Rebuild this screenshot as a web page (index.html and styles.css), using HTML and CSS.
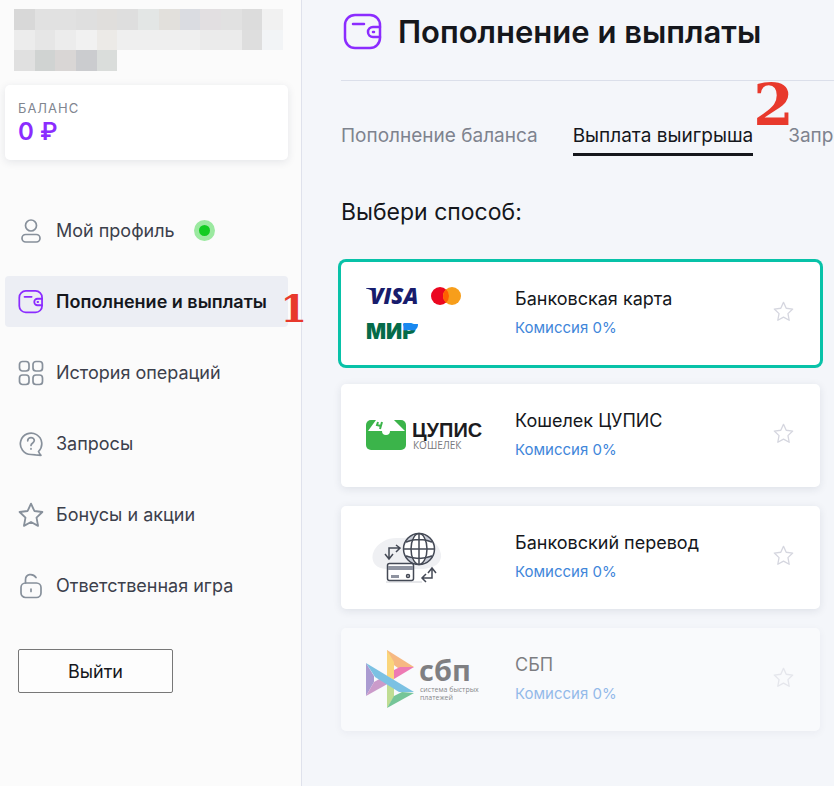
FILE: index.html
```html
<!DOCTYPE html>
<html lang="ru">
<head>
  <meta charset="UTF-8">
  <meta name="viewport" content="width=device-width, initial-scale=1">
  <title>Пополнение и выплаты</title>
  <link rel="stylesheet" href="styles.css">
</head>
<body>
  <svg class="sprite" aria-hidden="true">
    <symbol id="wallet" viewBox="0 0 40 38">
      <rect x="2" y="2" width="35" height="33" rx="10"/>
      <path d="M10 11h11M37 14h-7a5 5 0 0 0 0 10h7M30 19h1"/>
    </symbol>
    <symbol id="star" viewBox="0 0 24 24">
      <path d="M12 1.5l3.1 6.8 7.4.9-5.4 5.2 1.4 7.6-6.5-3.6L5.500 22l1.400-7.600L1.500 9.200l7.400-.9z"/>
    </symbol>
  </svg>

  <aside class="sidebar">
    <svg class="user" viewBox="0 0 13 3" preserveAspectRatio="none" shape-rendering="crispEdges" aria-hidden="true">
      <path fill="#d8d8d8" d="M0 0h1v1H0z"/><path fill="#e1e1e1" d="M1 0h2v1H1z"/>
      <path fill="#dfdfdf" d="M3 0h1v1H3z"/><path fill="#e0dedc" d="M4 0h1v1H4z"/>
      <path fill="#dedede" d="M5 0h1v1H5z"/><path fill="#e3e6e5" d="M6 0h1v1H6z"/>
      <path fill="#e2e0dc" d="M7 0h1v1H7z"/><path fill="#dadce1" d="M8 0h1v1H8z"/>
      <path fill="#e2dfe1" d="M9 0h1v1H9z"/><path fill="#e1e1e1" d="M10 0h1v1h-1z"/>
      <path fill="#dcdcdc" d="M11 0h1v1h-1z"/><path fill="#f1f1f1" d="M12 0h1v1h-1z"/>
      <path fill="#ececec" d="M0 1h1v1H0z"/><path fill="#e6e6e6" d="M1 1h1v1H1z"/>
      <path fill="#ececec" d="M2 1h1v1H2z"/><path fill="#f1f1f1" d="M3 1h1v1H3z"/>
      <path fill="#eceae7" d="M4 1h1v1H4z"/><path fill="#efefef" d="M5 1h4v1H5z"/>
      <path fill="#ebebeb" d="M9 1h2v1H9z"/><path fill="#dedede" d="M11 1h1v1h-1z"/>
      <path fill="#f2f4f6" d="M12 1h1v1h-1z"/><path fill="#e0e0e0" d="M0 2h1v1H0z"/>
      <path fill="#d0d3d2" d="M1 2h1v1H1z"/><path fill="#d9d6d5" d="M2 2h1v1H2z"/>
      <path fill="#cbcccf" d="M3 2h1v1H3z"/><path fill="#dadddb" d="M4 2h1v1H4z"/>
    </svg>

    <div class="balance">
      <span class="balance-label">БАЛАНС</span>
      <strong class="balance-sum">0 ₽</strong>
    </div>

    <nav class="menu">
      <a href="#">
        <svg class="icon" viewBox="0 0 26 26"><circle cx="13" cy="7.500" r="5.500"/><rect x="4" y="16.500" width="18" height="7.500" rx="3.700"/></svg>
        Мой профиль <span class="online"></span>
      </a>
      <a href="#" class="active">
        <svg class="icon"><use href="#wallet"/></svg>
        Пополнение и выплаты
        <span class="step step-one">1</span>
      </a>
      <a href="#">
        <svg class="icon" viewBox="0 0 26 26"><rect x="1.500" y="1.500" width="9.500" height="9.500" rx="3"/><rect x="15" y="1.500" width="9.500" height="9.500" rx="3"/><rect x="1.500" y="15" width="9.500" height="9.500" rx="3"/><rect x="15" y="15" width="9.500" height="9.500" rx="3"/></svg>
        История операций
      </a>
      <a href="#">
        <svg class="icon" viewBox="0 0 26 26"><path d="M20.500 20.500A10.700 10.700 0 1 0 13 23.500c2 0 3 .1 4.500.4l5.500.4c-1-1-1.800-2.200-2.500-3.800z"/><path d="M9.700 9.800c0-4.300 6.600-4.100 6.600-.2 0 2.400-3.300 2.300-3.300 4.900M13 17.500v.6"/></svg>
        Запросы
      </a>
      <a href="#">
        <svg class="icon"><use href="#star"/></svg>
        Бонусы и акции
      </a>
      <a href="#">
        <svg class="icon" viewBox="0 0 26 26"><rect x="3" y="10" width="20" height="14.500" rx="4.500"/><path d="M7.500 10V7c0-6 7-7.300 10.500-2.500M13 16v2.500"/></svg>
        Ответственная игра
      </a>
    </nav>

    <button type="button" class="logout">Выйти</button>
  </aside>

  <main class="content">
    <header class="page-title">
      <svg class="title-icon"><use href="#wallet"/></svg>
      <h1>Пополнение и выплаты</h1>
    </header>

    <nav class="tabs">
      <a href="#">Пополнение баланса</a>
      <a href="#" class="active">Выплата выигрыша<span class="step step-two">2</span></a>
      <a href="#">Запросы на выплату</a>
    </nav>

    <h2>Выбери способ:</h2>

    <ul class="methods">
      <li class="method selected">
        <label>
          <input type="radio" name="method" checked>
          <svg class="logo" viewBox="0 0 118 64" aria-hidden="true">
            <defs>
              <linearGradient id="mir" gradientUnits="userSpaceOnUse" x1="0" y1="42" x2="0" y2="57">
                <stop offset=".4" stop-color="#1988f0"/><stop offset=".45" stop-color="#056b49"/>
              </linearGradient>
            </defs>
            <path fill="#181c6c" d="M0 6h7l2 6C7 9 4 7 0 6.500z"/>
            <text class="visa" x="4" y="22">VISA</text>
            <circle cx="74" cy="14" r="9" fill="#eb0720"/>
            <circle cx="86" cy="14" r="9" fill="#f79e1b"/>
            <path fill="#ff5f00" d="M80 7.300a9 9 0 0 1 0 13.400 9 9 0 0 1 0-13.400z"/>
            <text class="mir" x="0" y="57">МИ<tspan fill="url(#mir)">Р</tspan></text>
            <path fill="#1988f0" d="M37 42h15c0 4-2 6-5 6h-5c-3 0-4-3-5-6z"/>
          </svg>
          <span class="info"><b>Банковская карта</b><span>Комиссия 0%</span></span>
        </label>
        <button type="button" class="fav" aria-label="В избранное"><svg><use href="#star"/></svg></button>
      </li>
      <li class="method">
        <label>
          <input type="radio" name="method">
          <svg class="logo" viewBox="0 0 118 64" aria-hidden="true">
            <rect y="16" width="40" height="30" rx="5" fill="#3bb44a"/>
            <path fill="#279a3b" d="M2 27L10 17h19l9 10z"/>
            <path fill="#fff" d="M10 16l17-1 12 12H24a4 4 0 0 1-8 0H2z"/>
            <path fill="none" stroke="#3bb44a" stroke-width="2" d="M12 18l-1 3 4 1M16 18l-2 7"/>
            <text class="tsupis" x="46" y="33">ЦУПИС</text>
            <text class="tsupis-sub" x="47" y="45">КОШЕЛЕК</text>
          </svg>
          <span class="info"><b>Кошелек ЦУПИС</b><span>Комиссия 0%</span></span>
        </label>
        <button type="button" class="fav" aria-label="В избранное"><svg><use href="#star"/></svg></button>
      </li>
      <li class="method">
        <label>
          <input type="radio" name="method">
          <svg class="logo" viewBox="0 0 118 64" aria-hidden="true">
            <path fill="#eff0f3" d="M20 14c10-4 18 0 28-4 12-3 25 7 27 18 1 10-8 14-18 15H20C2 42 2 22 20 14z"/>
            <path fill="#e6e7ea" d="M20 55h36v2H20z"/>
            <circle cx="53" cy="23" r="16" fill="#c8ccd7"/>
            <path fill="#fff" d="M48 8h10l3 7 7 3v10l-7 3-3 7H48l-3-7-7-3V18l7-3z"/>
            <g class="line">
              <circle class="line" cx="53" cy="23" r="15.500"/>
              <ellipse class="line" cx="53" cy="23" rx="8" ry="15.500"/>
              <path d="M53 8v31M37 23h32M40 16c8-3 18-3 26 0M40 30c8 3 18 3 26 0"/>
              <path d="M23 32V22h10M30 19l4 3-4 4M19 28l4 5 4-5"/>
              <path d="M66 43v9H56M62 47l4-5 4 5M60 48l-4 4 4 4"/>
            </g>
            <rect class="line" x="21.500" y="37.500" width="26" height="17" rx="2"/>
            <path fill="#8e93a0" d="M22 40h25v4H22zM25 49h8v3h-8z"/>
            <circle class="line" cx="42" cy="50" r="1.500"/>
          </svg>
          <span class="info"><b>Банковский перевод</b><span>Комиссия 0%</span></span>
        </label>
        <button type="button" class="fav" aria-label="В избранное"><svg><use href="#star"/></svg></button>
      </li>
      <li class="method disabled">
        <label>
          <input type="radio" name="method" disabled>
          <svg class="logo" viewBox="0 0 118 64" aria-hidden="true">
            <path fill="#6b4fae" d="M0 15l8 13v6L0 48z"/>
            <path fill="#a64fa3" d="M0 48l8-14 9-5 8 5z"/>
            <path fill="#f4831f" d="M21 2l27 17-16 1-11-8z"/>
            <path fill="#e5137a" d="M48 19L28 31v-9l6-3z"/>
            <path fill="#fcb813" d="M21 2l7 12v18l-7-4z"/>
            <path fill="#90c63e" d="M21 36l7 4v9l-7 11z"/>
            <path fill="#0b9b47" d="M21 60l7-12 8-4 12 1z"/>
            <path fill="#1593cf" d="M0 15l48 29H33L9 29z"/>
            <text class="sbp" x="53" y="33">сбп</text>
            <text class="sbp-sub" x="54" y="44">система быстрых</text>
            <text class="sbp-sub" x="54" y="52">платежей</text>
          </svg>
          <span class="info"><b>СБП</b><span>Комиссия 0%</span></span>
        </label>
        <button type="button" class="fav" aria-label="В избранное" disabled><svg><use href="#star"/></svg></button>
      </li>
    </ul>
  </main>
</body>
</html>
```
FILE: styles.css
```css
* {
  box-sizing: border-box;
}
body {
  margin: 0;
  min-height: 100vh;
  display: grid;
  grid-template-columns: 302px minmax(0, 1fr);
  font-family: Inter, "Liberation Sans", sans-serif;
  color: #15171c;
  background: #f4f6fa;
}
a {
  color: inherit;
  text-decoration: none;
}
svg {
  display: block;
  flex: none;
}
.sprite {
  position: absolute;
  width: 0;
  height: 0;
}

/* sidebar */
.sidebar {
  position: relative;
  z-index: 1;
  padding: 9px 13px 20px 5px;
  background: #fbfbfb;
  border-right: 1px solid #dfe2ec;
}
.user {
  width: 269px;
  height: 62px;
  margin-left: 9px;
}
.balance {
  display: flex;
  flex-direction: column;
  gap: 4px;
  margin-top: 14px;
  padding: 15px 13px;
  height: 75px;
  background: #fff;
  border-radius: 5px;
  box-shadow: 0 2px 8px rgba(30, 40, 70, 0.1);
}
.balance-label {
  font-size: 13px;
  line-height: 16px;
  letter-spacing: 1px;
  color: #80858f;
}
.balance-sum {
  font-size: 24px;
  line-height: 24px;
  font-weight: 600;
  color: #8b2cff;
}
.menu {
  display: flex;
  flex-direction: column;
  gap: 20px;
  margin-top: 45px;
}
.menu a {
  position: relative;
  display: flex;
  align-items: center;
  gap: 12px;
  height: 51px;
  padding: 0 13px;
  border-radius: 4px;
  font-size: 18px;
  white-space: nowrap;
  color: #3c404b;
}
.menu .active {
  background: #eceef4;
  font-weight: 600;
  color: #15171c;
}
.icon {
  width: 26px;
  height: 26px;
  fill: none;
  stroke: #87909b;
  stroke-width: 1.7;
  stroke-linecap: round;
  stroke-linejoin: round;
}
.active .icon {
  stroke: #8b2cff;
  stroke-width: 2.7;
}
.online {
  width: 21px;
  height: 21px;
  margin-left: 7px;
  border: 5px solid #9be9a0;
  border-radius: 50%;
  background: #12cc22;
}
.logout {
  display: block;
  width: 155px;
  height: 44px;
  margin: 38px 0 0 13px;
  border: 1px solid #777;
  border-radius: 2px;
  background: #fdfdfd;
  font: 18px Inter, sans-serif;
  color: #15171c;
}

/* step numbers over the page */
.step {
  position: absolute;
  font-family: "DejaVu Serif", serif;
  font-weight: bold;
  line-height: 1;
  color: #e8392c;
}
.step-one {
  right: -19px;
  top: 14px;
  font-size: 38px;
}
.step-two {
  left: 100%;
  top: -48px;
  font-size: 58px;
}

/* content */
.content {
  padding: 0 0 20px 39px;
  overflow: hidden;
}
.page-title {
  display: flex;
  align-items: center;
  gap: 15px;
  height: 81px;
  padding: 0 0 17px 2px;
  border-bottom: 1px solid #dbdfea;
}
.title-icon {
  width: 40px;
  height: 38px;
  fill: none;
  stroke: #8b2cff;
  stroke-width: 2.5;
  stroke-linecap: round;
}
h1 {
  margin: 0;
  font-size: 31px;
  font-weight: 600;
  white-space: nowrap;
}
.tabs {
  display: flex;
  gap: 35px;
  margin-top: 43px;
  font-size: 19px;
  line-height: 24px;
  white-space: nowrap;
  color: #7e838e;
}
.tabs a {
  position: relative;
  padding-bottom: 5px;
  border-bottom: 3px solid transparent;
}
.tabs .active {
  color: #15171c;
  border-color: #15171c;
}
h2 {
  margin: 42px 0 0;
  font-size: 23px;
  line-height: 28px;
  font-weight: 400;
}
.methods {
  display: flex;
  flex-direction: column;
  gap: 19px;
  margin: 36px 14px 0 0;
  padding: 0;
  list-style: none;
}
.method {
  display: flex;
  align-items: center;
  padding-right: 26px;
  background: #fff;
  border-radius: 5px;
  box-shadow: 0 2px 8px rgba(30, 40, 70, 0.1);
}
.selected {
  box-shadow: 0 0 0 3px #08c2a8;
}
.method label {
  flex: 1;
  display: grid;
  grid-template-columns: 118px 1fr;
  align-items: center;
  gap: 31px;
  height: 103px;
  padding-left: 25px;
}
.method input {
  position: absolute;
  opacity: 0;
}
.logo {
  width: 118px;
  height: 64px;
}
.info {
  display: flex;
  flex-direction: column;
  gap: 7px;
  padding-bottom: 2px;
  font-size: 15px;
  line-height: 20px;
  color: #3f86da;
}
.info b {
  font-size: 18px;
  line-height: 24px;
  font-weight: 400;
  color: #15171c;
}
.fav {
  padding: 0 0 4px;
  border: 0;
  background: none;
}
.fav svg {
  width: 21px;
  height: 21px;
  fill: none;
  stroke: #d5d6df;
  stroke-width: 1.5;
  stroke-linejoin: round;
}
.disabled {
  background: #f9fafc;
  box-shadow: 0 2px 8px rgba(30, 40, 70, 0.05);
}
.disabled label,
.disabled .fav {
  opacity: 0.55;
}

/* logo lettering */
.visa {
  font: italic 900 22px "Open Sans", sans-serif;
  fill: #181c6c;
}
.mir {
  font: 900 21px Inter, sans-serif;
  fill: #056b49;
}
.tsupis {
  font: bold 20px "Liberation Sans", sans-serif;
  fill: #1c1c1f;
}
.tsupis-sub {
  font: 10px "Open Sans", sans-serif;
  fill: #77787c;
}
.sbp {
  font: bold 29px "Open Sans", sans-serif;
  fill: #1c1c1f;
}
.sbp-sub {
  font: 7px "Open Sans", sans-serif;
  fill: #1c1c1f;
}
.line {
  fill: none;
  stroke: #444955;
  stroke-width: 1.5;
}
rect.line {
  fill: #fff;
}
```
